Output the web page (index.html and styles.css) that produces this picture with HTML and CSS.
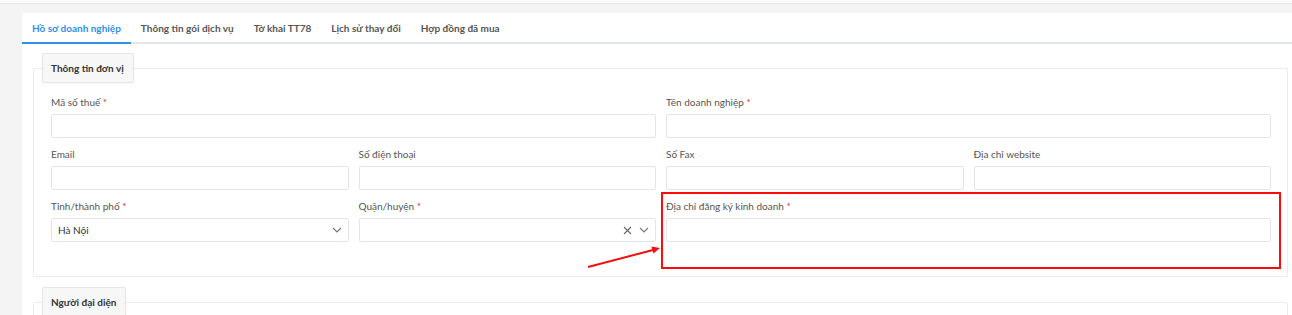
FILE: index.html
```html
<!DOCTYPE html>
<html lang="vi">

<head>
    <meta charset="UTF-8">
    <meta name="viewport" content="width=device-width, initial-scale=1.0">
    <title>Hồ sơ doanh nghiệp</title>
    <link rel="stylesheet" href="styles.css">
</head>

<body>
    <div class="topline"></div>
    <div class="page">
        <div class="panel">
            <nav class="tabs">
                <a href="#" class="tabs__item tabs__item--active">Hồ sơ doanh nghiệp</a>
                <a href="#" class="tabs__item">Thông tin gói dịch vụ</a>
                <a href="#" class="tabs__item">Tờ khai TT78</a>
                <a href="#" class="tabs__item">Lịch sử thay đổi</a>
                <a href="#" class="tabs__item">Hợp đồng đã mua</a>
            </nav>

            <div class="panel__body">
                <section class="section">
                    <div class="section__title">Thông tin đơn vị</div>
                    <div class="section__body">
                        <div class="form-grid">
                            <div class="field field--half">
                                <label class="field__label">Mã số thuế <span class="required">*</span></label>
                                <input type="text" class="field__input">
                            </div>
                            <div class="field field--half">
                                <label class="field__label">Tên doanh nghiệp <span class="required">*</span></label>
                                <input type="text" class="field__input">
                            </div>

                            <div class="field">
                                <label class="field__label">Email</label>
                                <input type="text" class="field__input">
                            </div>
                            <div class="field">
                                <label class="field__label">Số điện thoại</label>
                                <input type="text" class="field__input">
                            </div>
                            <div class="field">
                                <label class="field__label">Số Fax</label>
                                <input type="text" class="field__input">
                            </div>
                            <div class="field">
                                <label class="field__label">Địa chỉ website</label>
                                <input type="text" class="field__input">
                            </div>

                            <div class="field">
                                <label class="field__label">Tỉnh/thành phố <span class="required">*</span></label>
                                <div class="select">
                                    <span class="select__value">Hà Nội</span>
                                    <svg class="select__icon" width="10" height="6" viewBox="0 0 10 6">
                                        <path d="M1 1l4 4 4-4" fill="none" stroke="#777" stroke-width="1.1"/>
                                    </svg>
                                </div>
                            </div>
                            <div class="field">
                                <label class="field__label">Quận/huyện <span class="required">*</span></label>
                                <div class="select">
                                    <span class="select__value"></span>
                                    <svg class="select__clear" width="9" height="9" viewBox="0 0 9 9">
                                        <path d="M1 1l7 7M8 1l-7 7" fill="none" stroke="#666" stroke-width="1.1"/>
                                    </svg>
                                    <svg class="select__icon" width="10" height="6" viewBox="0 0 10 6">
                                        <path d="M1 1l4 4 4-4" fill="none" stroke="#777" stroke-width="1.1"/>
                                    </svg>
                                </div>
                            </div>
                            <div class="field field--half field--marked">
                                <label class="field__label">Địa chỉ đăng ký kinh doanh <span class="required">*</span></label>
                                <input type="text" class="field__input">
                                <div class="highlight"></div>
                                <svg class="pointer" width="76" height="26" viewBox="0 0 76 26">
                                    <line x1="2" y1="23" x2="67" y2="6" stroke="#f01010" stroke-width="2"/>
                                    <polygon points="74,4 67.4,9.6 65.4,2.4" fill="#f01010"/>
                                </svg>
                            </div>
                        </div>
                    </div>
                </section>

                <section class="section">
                    <div class="section__title">Người đại diện</div>
                    <div class="section__body section__body--tall"></div>
                </section>
            </div>
        </div>
    </div>
</body>

</html>
```

FILE: styles.css
```css
:root {
    --color-bg: #f4f4f5;
    --color-text: #333;
    --color-label: #555;
    --color-primary: #2e8fe8;
    --color-border: #e2e5e9;
    --color-line: #ececec;
    --color-required: #f5222d;
}

* {
    box-sizing: border-box;
}

body {
    margin: 0;
    background-color: var(--color-bg);
    color: var(--color-text);
    font-family: 'Lato', 'Noto Sans', sans-serif;
    font-size: 10px;
    overflow: hidden;
}

.topline {
    height: 4px;
    background-color: #fbfbfb;
    border-bottom: 1px solid #e6e6e6;
}

.page {
    padding: 9px 0 0 22px;
}

.panel {
    background-color: #fff;
    min-height: 320px;
}

.tabs {
    display: flex;
    height: 31px;
    border-bottom: 2px solid #e3e6ea;
}

.tabs__item {
    display: flex;
    align-items: center;
    padding: 1px 10px 0;
    margin-bottom: -2px;
    border-bottom: 2px solid transparent;
    color: #555;
    font-weight: 700;
    font-size: 10px;
    text-decoration: none;
}

.tabs__item--active {
    color: var(--color-primary);
    border-bottom-color: var(--color-primary);
}

.panel__body {
    padding: 9px 4px 0 11px;
}

.section + .section {
    margin-top: 10px;
}

.section__title {
    position: relative;
    z-index: 1;
    display: inline-block;
    margin-left: 9px;
    height: 30px;
    line-height: 28px;
    padding: 0 9px 0 8px;
    background-color: #f7f7f8;
    border: 1px solid #e6e6e6;
    border-radius: 2px;
    box-shadow: 0 1px 2px rgba(0, 0, 0, 0.04);
    font-weight: 700;
    color: #333;
}

.section__body {
    margin-top: -15px;
    border: 1px solid var(--color-line);
    border-radius: 2px;
    padding: 26px 16px 34px 17px;
}

.section__body--tall {
    height: 100px;
}

.form-grid {
    display: grid;
    grid-template-columns: repeat(4, 1fr);
    column-gap: 10px;
    row-gap: 9px;
}

.field {
    display: flex;
    flex-direction: column;
    gap: 5px;
}

.field--half {
    grid-column: span 2;
}

.field--marked {
    position: relative;
}

.field__label {
    height: 14px;
    line-height: 14px;
    color: var(--color-label);
    font-size: 10px;
}

.required {
    color: var(--color-required);
}

.field__input,
.select {
    height: 24px;
    border: 1px solid var(--color-border);
    border-radius: 2px;
    background-color: #fff;
}

.field__input {
    width: 100%;
    padding: 0 6px;
    font-family: inherit;
    font-size: 10px;
    outline: none;
}

.select {
    display: flex;
    align-items: center;
    gap: 7px;
    padding: 0 6px 0 6px;
}

.select__value {
    flex: 1;
    color: var(--color-text);
    font-size: 10px;
}

.select__icon {
    display: block;
}

.select__clear {
    display: block;
}

/* annotation drawn over the screenshot */
.highlight {
    position: absolute;
    left: -5px;
    top: -7px;
    right: -10px;
    bottom: -27px;
    border: 2px solid #ff0a0a;
    pointer-events: none;
}

.pointer {
    position: absolute;
    left: -80px;
    top: 45px;
}
```
